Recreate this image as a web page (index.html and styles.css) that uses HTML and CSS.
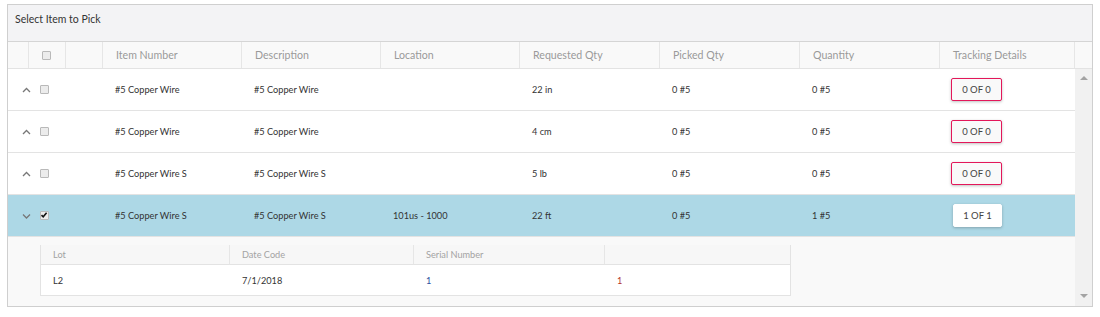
FILE: index.html
```html
<html>
    <head>
        <title>Select Item to Pick</title>
        <link rel="stylesheet" href="styles.css">
    </head>
    <body>
        <div class="panel">
            <div class="panel-title">Select Item to Pick</div>

            <div class="grid-head">
                <div class="th"></div>
                <div class="th th-check"><span class="cb"></span></div>
                <div class="th"></div>
                <div class="th">Item Number</div>
                <div class="th">Description</div>
                <div class="th">Location</div>
                <div class="th">Requested Qty</div>
                <div class="th">Picked Qty</div>
                <div class="th">Quantity</div>
                <div class="th">Tracking Details</div>
                <div class="th th-scroll"></div>
            </div>

            <div class="grid-body">
                <div class="rows">
                    <div class="row">
                        <div class="td td-toggle"><svg class="chev" width="9" height="6" viewBox="0 0 9 6"><polyline points="1,5 4.5,1.5 8,5" /></svg></div>
                        <div class="td td-check"><span class="cb"></span></div>
                        <div class="td"></div>
                        <div class="td">#5 Copper Wire</div>
                        <div class="td">#5 Copper Wire</div>
                        <div class="td"></div>
                        <div class="td">22 in</div>
                        <div class="td">0 #5</div>
                        <div class="td">0 #5</div>
                        <div class="td td-track"><span class="track">0 OF 0</span></div>
                    </div>
                    <div class="row">
                        <div class="td td-toggle"><svg class="chev" width="9" height="6" viewBox="0 0 9 6"><polyline points="1,5 4.5,1.5 8,5" /></svg></div>
                        <div class="td td-check"><span class="cb"></span></div>
                        <div class="td"></div>
                        <div class="td">#5 Copper Wire</div>
                        <div class="td">#5 Copper Wire</div>
                        <div class="td"></div>
                        <div class="td">4 cm</div>
                        <div class="td">0 #5</div>
                        <div class="td">0 #5</div>
                        <div class="td td-track"><span class="track">0 OF 0</span></div>
                    </div>
                    <div class="row">
                        <div class="td td-toggle"><svg class="chev" width="9" height="6" viewBox="0 0 9 6"><polyline points="1,5 4.5,1.5 8,5" /></svg></div>
                        <div class="td td-check"><span class="cb"></span></div>
                        <div class="td"></div>
                        <div class="td">#5 Copper Wire S</div>
                        <div class="td">#5 Copper Wire S</div>
                        <div class="td"></div>
                        <div class="td">5 lb</div>
                        <div class="td">0 #5</div>
                        <div class="td">0 #5</div>
                        <div class="td td-track"><span class="track">0 OF 0</span></div>
                    </div>
                    <div class="row selected">
                        <div class="td td-toggle"><svg class="chev" width="9" height="6" viewBox="0 0 9 6"><polyline points="1,1.5 4.5,5 8,1.5" /></svg></div>
                        <div class="td td-check"><span class="cb checked"><svg width="8" height="8" viewBox="0 0 8 8"><path d="M1.5 4.2 L3.2 5.8 L6.6 1.8" /></svg></span></div>
                        <div class="td"></div>
                        <div class="td">#5 Copper Wire S</div>
                        <div class="td">#5 Copper Wire S</div>
                        <div class="td">101us - 1000</div>
                        <div class="td">22 ft</div>
                        <div class="td">0 #5</div>
                        <div class="td">1 #5</div>
                        <div class="td td-track"><span class="track done">1 OF 1</span></div>
                    </div>
                    <div class="detail">
                        <div class="sub">
                            <div class="sub-th">Lot</div>
                            <div class="sub-th">Date Code</div>
                            <div class="sub-th">Serial Number</div>
                            <div class="sub-th"></div>
                            <div class="sub-td">L2</div>
                            <div class="sub-td">7/1/2018</div>
                            <div class="sub-td serial">1</div>
                            <div class="sub-td count">1</div>
                        </div>
                    </div>
                </div>
                <div class="scrollbar">
                    <span class="arrow up"></span>
                    <span class="arrow down"></span>
                </div>
            </div>
        </div>
    </body>
</html>
```

FILE: styles.css
```css
body{
    background-color: #fff;
    margin: 0px;
    padding: 4px 7px;
    font-family: Lato, "Liberation Sans", sans-serif;
    color: #333;
}
.panel{
    width: 1084px;
    border: 1px solid #cfcfcf;
    background-color: #f9f9f9;
}
.panel-title{
    height: 36px;
    line-height: 28px;
    padding-left: 7px;
    font-size: 10.5px;
    color: #333;
    background-color: #f3f3f5;
    border-bottom: 1px solid #d5d5d5;
}

/* header row */
.grid-head{
    display: grid;
    grid-template-columns: 21px 37px 37px 139px 139px 139px 140px 140px 140px 135px 17px;
    height: 26px;
    background-color: #f9f9f9;
    border-bottom: 1px solid #e3e3e3;
}
.th{
    border-right: 1px solid #e6e6e6;
    padding-left: 13px;
    font-size: 10.6px;
    color: #9a9a9a;
    display: flex;
    align-items: center;
}
.th-check{
    padding-left: 13px;
}
.th-scroll{
    border-right: 0px;
}

/* body rows */
.grid-body{
    display: flex;
}
.rows{
    width: 1067px;
}
.row{
    display: grid;
    grid-template-columns: 21px 37px 37px 139px 139px 139px 140px 140px 140px 135px;
    height: 41px;
    background-color: #fff;
    border-bottom: 1px solid #e3e3e3;
}
.row.selected{
    background-color: #add8e6;
}
.td{
    display: flex;
    align-items: center;
    padding-left: 12px;
    font-size: 9.2px;
    color: #333;
    white-space: nowrap;
}
.td-toggle{
    padding-left: 14px;
    overflow: visible;
}
.td-check{
    padding-left: 11px;
}
.td-track{
    padding-left: 11px;
}
.chev{
    flex-shrink: 0;
    fill: none;
    stroke: #777;
    stroke-width: 1.3;
}

.cb{
    display: inline-block;
    flex-shrink: 0;
    width: 7px;
    height: 7px;
    border: 1px solid #b9b9b9;
    border-radius: 1px;
    background-color: #ececec;
    position: relative;
}
.cb svg{
    position: absolute;
    left: -1px;
    top: -1px;
    fill: none;
    stroke: #111;
    stroke-width: 1.6;
}

.track{
    display: flex;
    align-items: center;
    justify-content: center;
    width: 49px;
    height: 21px;
    border: 1px solid #e3175a;
    border-radius: 2px;
    background-color: #f9f9f9;
    box-shadow: 0 1px 3px rgba(0,0,0,0.25);
    font-size: 9.5px;
    color: #444;
}
.track.done{
    border-color: #fff;
    background-color: #fff;
    margin-left: 2px;
    width: 47px;
}

/* expanded detail */
.detail{
    padding: 8px 0px 9px 32px;
    height: 52px;
    background-color: #f9f9f9;
}
.sub{
    width: 749px;
    display: grid;
    grid-template-columns: 189px 184px 191px 1fr;
    grid-template-rows: 20px 30px;
    border: 1px solid #e3e3e3;
    border-top: 0px;
}
.sub-th{
    display: flex;
    align-items: center;
    padding-left: 12px;
    font-size: 9.2px;
    color: #a3a3a3;
    background-color: #f7f7f7;
    border-right: 1px solid #e6e6e6;
    border-bottom: 1px solid #e3e3e3;
}
.sub-th:nth-child(4){
    border-right: 0px;
}
.sub-td{
    display: flex;
    align-items: center;
    padding-left: 12px;
    font-size: 9.2px;
    color: #333;
    background-color: #fff;
}
.sub-td.serial{
    color: #2b4f9e;
}
.sub-td.count{
    color: #b5352a;
}

/* fake scrollbar */
.scrollbar{
    width: 17px;
    background-color: #f1f1f1;
    position: relative;
}
.arrow{
    position: absolute;
    left: 5px;
    width: 0px;
    height: 0px;
    border-left: 4px solid transparent;
    border-right: 4px solid transparent;
}
.arrow.up{
    top: 7px;
    border-bottom: 4px solid #a3a3a3;
}
.arrow.down{
    bottom: 8px;
    border-top: 4px solid #a3a3a3;
}
```
